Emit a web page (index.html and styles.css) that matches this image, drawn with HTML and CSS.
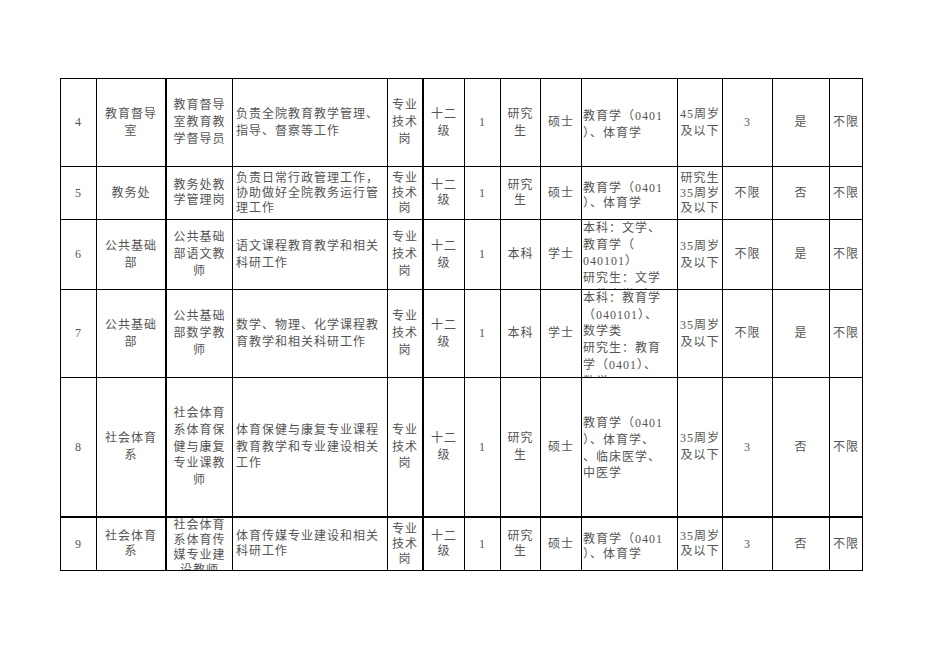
FILE: index.html
```html
<!DOCTYPE html>
<html lang="zh-CN">
<head>
<meta charset="utf-8">
<title>岗位表</title>
<link rel="stylesheet" href="styles.css">
</head>
<body>
<div class="page">
  <div class="sheet">
    <div class="row r88">
      <div class="c">4</div>
      <div class="c thick">教育督导<br>室</div>
      <div class="c">教育督导<br>室教育教<br>学督导员</div>
      <div class="c left">负责全院教育教学管理、<br>指导、督察等工作</div>
      <div class="c thick">专业<br>技术<br>岗</div>
      <div class="c">十二<br>级</div>
      <div class="c">1</div>
      <div class="c">研究<br>生</div>
      <div class="c">硕士</div>
      <div class="c left major">教育学（0401<br>）、体育学</div>
      <div class="c">45周岁<br>及以下</div>
      <div class="c">3</div>
      <div class="c">是</div>
      <div class="c">不限</div>
    </div>
    <div class="row r53">
      <div class="c">5</div>
      <div class="c thick">教务处</div>
      <div class="c">教务处教<br>学管理岗</div>
      <div class="c left">负责日常行政管理工作，<br>协助做好全院教务运行管<br>理工作</div>
      <div class="c thick">专业<br>技术<br>岗</div>
      <div class="c">十二<br>级</div>
      <div class="c">1</div>
      <div class="c">研究<br>生</div>
      <div class="c">硕士</div>
      <div class="c left major">教育学（0401<br>）、体育学</div>
      <div class="c">研究生<br>35周岁<br>及以下</div>
      <div class="c">不限</div>
      <div class="c">否</div>
      <div class="c">不限</div>
    </div>
    <div class="row r70">
      <div class="c">6</div>
      <div class="c thick">公共基础<br>部</div>
      <div class="c">公共基础<br>部语文教<br>师</div>
      <div class="c left">语文课程教育教学和相关<br>科研工作</div>
      <div class="c thick">专业<br>技术<br>岗</div>
      <div class="c">十二<br>级</div>
      <div class="c">1</div>
      <div class="c">本科</div>
      <div class="c">学士</div>
      <div class="c left top">本科：文学、<br>教育学（<br>040101）<br>研究生：文学<br>、教育学（<br>0401）</div>
      <div class="c">35周岁<br>及以下</div>
      <div class="c">不限</div>
      <div class="c">是</div>
      <div class="c">不限</div>
    </div>
    <div class="row r88">
      <div class="c">7</div>
      <div class="c thick">公共基础<br>部</div>
      <div class="c">公共基础<br>部数学教<br>师</div>
      <div class="c left">数学、物理、化学课程教<br>育教学和相关科研工作</div>
      <div class="c thick">专业<br>技术<br>岗</div>
      <div class="c">十二<br>级</div>
      <div class="c">1</div>
      <div class="c">本科</div>
      <div class="c">学士</div>
      <div class="c left top">本科：教育学<br>（040101）、<br>数学类<br>研究生：教育<br>学（0401）、<br>数学</div>
      <div class="c">35周岁<br>及以下</div>
      <div class="c">不限</div>
      <div class="c">是</div>
      <div class="c">不限</div>
    </div>
    <div class="row r140 thickbottom">
      <div class="c">8</div>
      <div class="c thick">社会体育<br>系</div>
      <div class="c">社会体育<br>系体育保<br>健与康复<br>专业课教<br>师</div>
      <div class="c left">体育保健与康复专业课程<br>教育教学和专业建设相关<br>工作</div>
      <div class="c thick">专业<br>技术<br>岗</div>
      <div class="c">十二<br>级</div>
      <div class="c">1</div>
      <div class="c">研究<br>生</div>
      <div class="c">硕士</div>
      <div class="c left major">教育学（0401<br>）、体育学、<br>、临床医学、<br>中医学</div>
      <div class="c">35周岁<br>及以下</div>
      <div class="c">3</div>
      <div class="c">否</div>
      <div class="c">不限</div>
    </div>
    <div class="row r53">
      <div class="c">9</div>
      <div class="c thick">社会体育<br>系</div>
      <div class="c top">社会体育<br>系体育传<br>媒专业建<br>设教师</div>
      <div class="c left">体育传媒专业建设和相关<br>科研工作</div>
      <div class="c thick">专业<br>技术<br>岗</div>
      <div class="c">十二<br>级</div>
      <div class="c">1</div>
      <div class="c">研究<br>生</div>
      <div class="c">硕士</div>
      <div class="c left major">教育学（0401<br>）、体育学</div>
      <div class="c">35周岁<br>及以下</div>
      <div class="c">3</div>
      <div class="c">否</div>
      <div class="c">不限</div>
    </div>
  </div>
</div>
</body>
</html>
```
FILE: styles.css
```css
html, body {
  margin: 0;
  padding: 0;
  background: #ffffff;
}

.page {
  width: 936px;
  height: 662px;
  padding: 78px 0 0 60px;
  box-sizing: border-box;
  overflow: hidden;
}

.sheet {
  width: 803px;
  border-top: 1px solid #000;
  border-left: 1px solid #000;
  box-sizing: border-box;
  font-family: "Liberation Serif", "Noto Sans CJK SC", serif;
  font-size: 12px;
  letter-spacing: 1px;
  line-height: 16.7px;
  color: #555;
}

.row {
  display: grid;
  grid-template-columns: 36px 70px 66px 155px 36px 41px 36px 40px 41px 96px 45px 50px 57px 33px;
}

.r88 { height: 88px; }
.r53 { height: 53px; line-height: 15px; }
.r70 { height: 70px; }
.r140 { height: 140px; }

.c {
  display: flex;
  flex-direction: column;
  justify-content: center;
  align-items: center;
  text-align: center;
  white-space: nowrap;
  overflow: hidden;
  border-right: 1px solid #000;
  border-bottom: 1px solid #000;
  box-sizing: border-box;
}

.c.thick {
  border-right-width: 2px;
}

.thickbottom .c {
  border-bottom-width: 2px;
}

.c.left {
  align-items: flex-start;
  text-align: left;
  padding-left: 3px;
}

.c.major {
  padding-left: 1px;
  padding-top: 5px;
}

.thickbottom .c.major {
  padding-top: 3px;
}

.c.top {
  justify-content: flex-start;
}

.c.left.top {
  padding-left: 1px;
}
```
